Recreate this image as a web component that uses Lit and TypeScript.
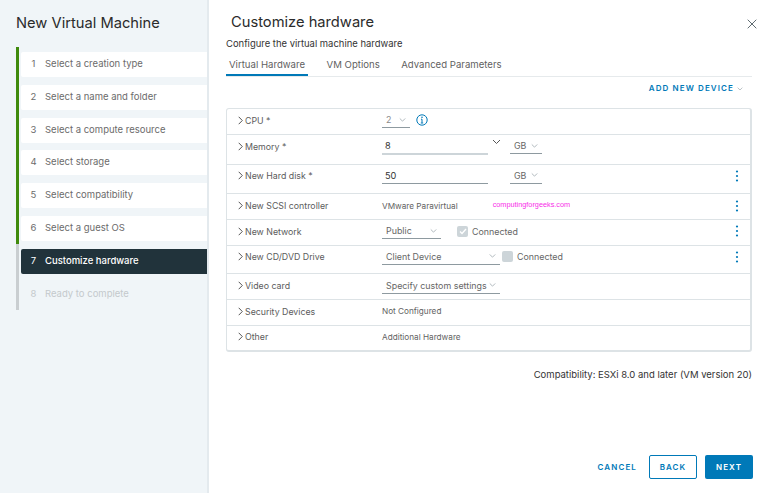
import { LitElement, html, css, svg } from "lit";
import { customElement } from "lit/decorators.js";

const chev = (w = 9) => html`<svg class="chev" width="${w}" height="6" viewBox="0 0 9 6"><path d="M1 1l3.5 3.5L8 1" fill="none" stroke="#9aa5ab" stroke-width="1"/></svg>`;
const arrow = html`<svg class="arrow" width="5" height="9" viewBox="0 0 5 9"><path d="M.7 .8l3.6 3.7L.7 8.2" fill="none" stroke="#565656" stroke-width="1"/></svg>`;
const dots = html`<svg class="dots" width="4" height="12" viewBox="0 0 4 12">${[1.5, 6, 10.5].map((y) => svg`<circle cx="2" cy="${y}" r="1.1" fill="#0079b8"/>`)}</svg>`;

const steps = ["Select a creation type", "Select a name and folder", "Select a compute resource", "Select storage", "Select compatibility", "Select a guest OS", "Customize hardware", "Ready to complete"];

@customElement("app-root")
export class AppRoot extends LitElement {
  static styles = css`
    :host { display: block; width: 768px; height: 493px; overflow: hidden; background: #fff; font-family: "Inter", "Liberation Sans", sans-serif; color: #565656; }
    .page { display: flex; height: 493px; }
    .side { flex: none; background: #f0f5f8; border-right: 2px solid #e4eaee; box-sizing: content-box; padding-left: 16px; margin: 0; width: 191px; }
    .side h1 { font-size: 14.7px; font-weight: 400; color: #2b2b2b; margin: 13px 0 0; line-height: 20px; }
    .nav { margin-top: 14px; display: flex; flex-direction: column; border-left: 3px solid #c9ced1; height: 263px; width: 188px; box-sizing: content-box; position: relative; }
    .prog { position: absolute; left: -3px; top: 0; width: 3px; height: 197px; background: #3f8a0c; }
    .step { height: 25px; margin: 5px 0 2.8px 2px; background: #fff; display: flex; align-items: center; font-size: 9.5px; color: #6b6b6b; border-radius: 2px 0 0 2px; line-height: 12px; padding-bottom: 1px; box-sizing: border-box; }
    .step b { font-weight: 400; width: 11px; text-align: center; margin: 0 6px 0 7px; }
    .step.cur { background: #21333b; color: #fff; font-weight: 500; }
    .step.off { background: transparent; color: #c4c9cc; }
    .main { flex: 1; padding: 0 16px 0 17px; display: flex; flex-direction: column; position: relative; }
    .title { font-size: 14.7px; color: #2b2b2b; margin: 12px 0 0 5px; line-height: 20px; font-weight: 400; }
    .close { position: absolute; top: 19px; right: 11px; }
    .sub { font-size: 9.45px; color: #333; margin-top: 6px; line-height: 12px; }
    .tabs { display: flex; gap: 15.5px; border-bottom: 1px solid #e6eaec; margin-top: 7px; height: 19px; box-sizing: content-box; }
    .tab { font-size: 9.6px; color: #5f5f5f; padding: 0 3px; line-height: 15px; height: 19px; box-sizing: border-box; }
    .tab.on { border-bottom: 2px solid #0079b8; }
    .add { align-self: flex-end; margin: 5px 9px 0 0; font-size: 8px; letter-spacing: 1.1px; color: #0079b8; font-weight: 600; display: flex; align-items: center; gap: 3px; line-height: 13px; height: 13px; }
    .table { margin-top: 12.5px; border: 1px solid #dde3e6; border-width: 1px 2px 2px 1px; border-radius: 3px; display: flex; flex-direction: column; }
    .row { display: grid; grid-template-columns: 155px 1fr 27px; align-items: center; border-top: 1px solid #dde3e6; font-size: 8.8px; box-sizing: border-box; padding-bottom: 2px; }
    .row:first-child { border-top: 0; }
    .row.tall { padding-bottom: 7px; }
    .row.cd { padding-bottom: 5px; }
    .name { display: flex; align-items: center; gap: 2px; padding-left: 11px; color: #5c5c5c; }
    .val { display: flex; align-items: center; color: #626262; font-size: 8.2px; }
    .sel { display: flex; align-items: center; justify-content: space-between; border-bottom: 1px solid #8e9aa0; height: 16px; padding: 0 4px; box-sizing: border-box; color: #666; font-size: 8.9px; }
    .field { border-bottom: 1px solid #8e9aa0; height: 17px; padding-left: 3px; box-sizing: border-box; color: #333; font-size: 9.2px; display: flex; align-items: center; }
    .field.soft { border-bottom: 2px solid #cdd5d9; }
    .w28 { width: 28px; color: #8a8a8a; }
    .w32 { width: 32px; margin-left: 22px; }
    .w32.near { margin-left: 9px; }
    .w59 { width: 59px; }
    .w118 { width: 118px; }
    .w106 { width: 106px; }
    .mem { margin: -9px 0 0 4px; }
    .info { margin-left: 6px; }
    .check { width: 11px; height: 11px; background: #cdd5d9; border-radius: 2px; display: flex; align-items: center; justify-content: center; margin-left: 16px; }
    .check.near { margin-left: 2px; }
    .lbl { font-size: 8.9px; color: #666; margin-left: 4px; }
    .mark { font-family: "Liberation Sans", sans-serif; color: #f82ee8; font-size: 7.3px; margin-left: 35px; transform: translateY(-1px); }
    .dots { justify-self: center; }
    .compat { align-self: flex-end; font-size: 9.5px; color: #333; margin-top: 16.5px; line-height: 12px; }
    .foot { margin-top: auto; margin-bottom: 14px; margin-right: -1px; display: flex; justify-content: flex-end; align-items: center; font-size: 8px; letter-spacing: 1.1px; font-weight: 600; }
    .btn { width: 48px; height: 24px; display: flex; align-items: center; justify-content: center; border-radius: 2px; box-sizing: border-box; color: #0079b8; }
    .btn.back { border: 1px solid #0079b8; margin: 0 8px 0 12px; }
    .btn.next { background: #0079b8; color: #fff; }
    .cancel { color: #0079b8; }
    .h255 { height: 25.5px; } .h26 { height: 26px; } .h285 { height: 28.5px; } .h29 { height: 29px; } .h30 { height: 30px; }
  `;

  render() {
    return html`<div class="page">
      <aside class="side">
        <h1>New Virtual Machine</h1>
        <div class="nav">
          <div class="prog"></div>
          ${steps.map((s, i) => html`<div class="step ${i === 6 ? "cur" : i === 7 ? "off" : ""}"><b>${i + 1}</b>${s}</div>`)}
        </div>
      </aside>
      <main class="main">
        <div class="title">Customize hardware</div>
        <svg class="close" width="10" height="10" viewBox="0 0 10 10"><path d="M.7.7l8.6 8.6M9.3.7L.7 9.3" stroke="#5f6b71" stroke-width="1" fill="none"/></svg>
        <div class="sub">Configure the virtual machine hardware</div>
        <div class="tabs">
          <div class="tab on">Virtual Hardware</div>
          <div class="tab">VM Options</div>
          <div class="tab">Advanced Parameters</div>
        </div>
        <div class="add">ADD NEW DEVICE ${chev(6)}</div>
        <div class="table">
          <div class="row h255">
            <div class="name">${arrow} CPU *</div>
            <div class="val">
              <div class="sel w28">2 ${chev(7)}</div>
              <svg class="info" width="12" height="12" viewBox="0 0 12 12"><circle cx="6" cy="6" r="5.2" fill="none" stroke="#0079b8" stroke-width="1"/><path d="M6 5.2v3.6M4.8 9h2.4M5 5.2h1" stroke="#0079b8" fill="none"/><circle cx="6" cy="3.2" r=".8" fill="#0079b8"/></svg>
            </div><span></span>
          </div>
          <div class="row h30 tall">
            <div class="name">${arrow} Memory *</div>
            <div class="val">
              <div class="field w106 soft">8</div>
              <svg class="mem" width="9" height="6" viewBox="0 0 9 6"><path d="M1 1l3.5 3.5L8 1" fill="none" stroke="#565656"/></svg>
              <div class="sel w32 near">GB ${chev(7)}</div>
            </div><span></span>
          </div>
          <div class="row h29 tall">
            <div class="name">${arrow} New Hard disk *</div>
            <div class="val">
              <div class="field w106">50</div>
              <div class="sel w32">GB ${chev(7)}</div>
            </div>${dots}
          </div>
          <div class="row h26">
            <div class="name">${arrow} New SCSI controller</div>
            <div class="val">VMware Paravirtual<span class="mark">computingforgeeks.com</span></div>${dots}
          </div>
          <div class="row h255">
            <div class="name">${arrow} New Network</div>
            <div class="val">
              <div class="sel w59">Public ${chev(7)}</div>
              <div class="check"><svg width="8" height="7" viewBox="0 0 8 7"><path d="M1 3.5l2 2L7 1" fill="none" stroke="#fff" stroke-width="1.3"/></svg></div>
              <span class="lbl">Connected</span>
            </div>${dots}
          </div>
          <div class="row h285 cd">
            <div class="name">${arrow} New CD/DVD Drive</div>
            <div class="val">
              <div class="sel w118">Client Device ${chev(7)}</div>
              <div class="check near"></div>
              <span class="lbl">Connected</span>
            </div>${dots}
          </div>
          <div class="row h26">
            <div class="name">${arrow} Video card</div>
            <div class="val"><div class="sel w118">Specify custom settings ${chev(7)}</div></div><span></span>
          </div>
          <div class="row h255">
            <div class="name">${arrow} Security Devices</div>
            <div class="val">Not Configured</div><span></span>
          </div>
          <div class="row h255">
            <div class="name">${arrow} Other</div>
            <div class="val">Additional Hardware</div><span></span>
          </div>
        </div>
        <div class="compat">Compatibility: ESXi 8.0 and later (VM version 20)</div>
        <div class="foot">
          <span class="cancel">CANCEL</span>
          <div class="btn back">BACK</div>
          <div class="btn next">NEXT</div>
        </div>
      </main>
    </div>`;
  }
}
